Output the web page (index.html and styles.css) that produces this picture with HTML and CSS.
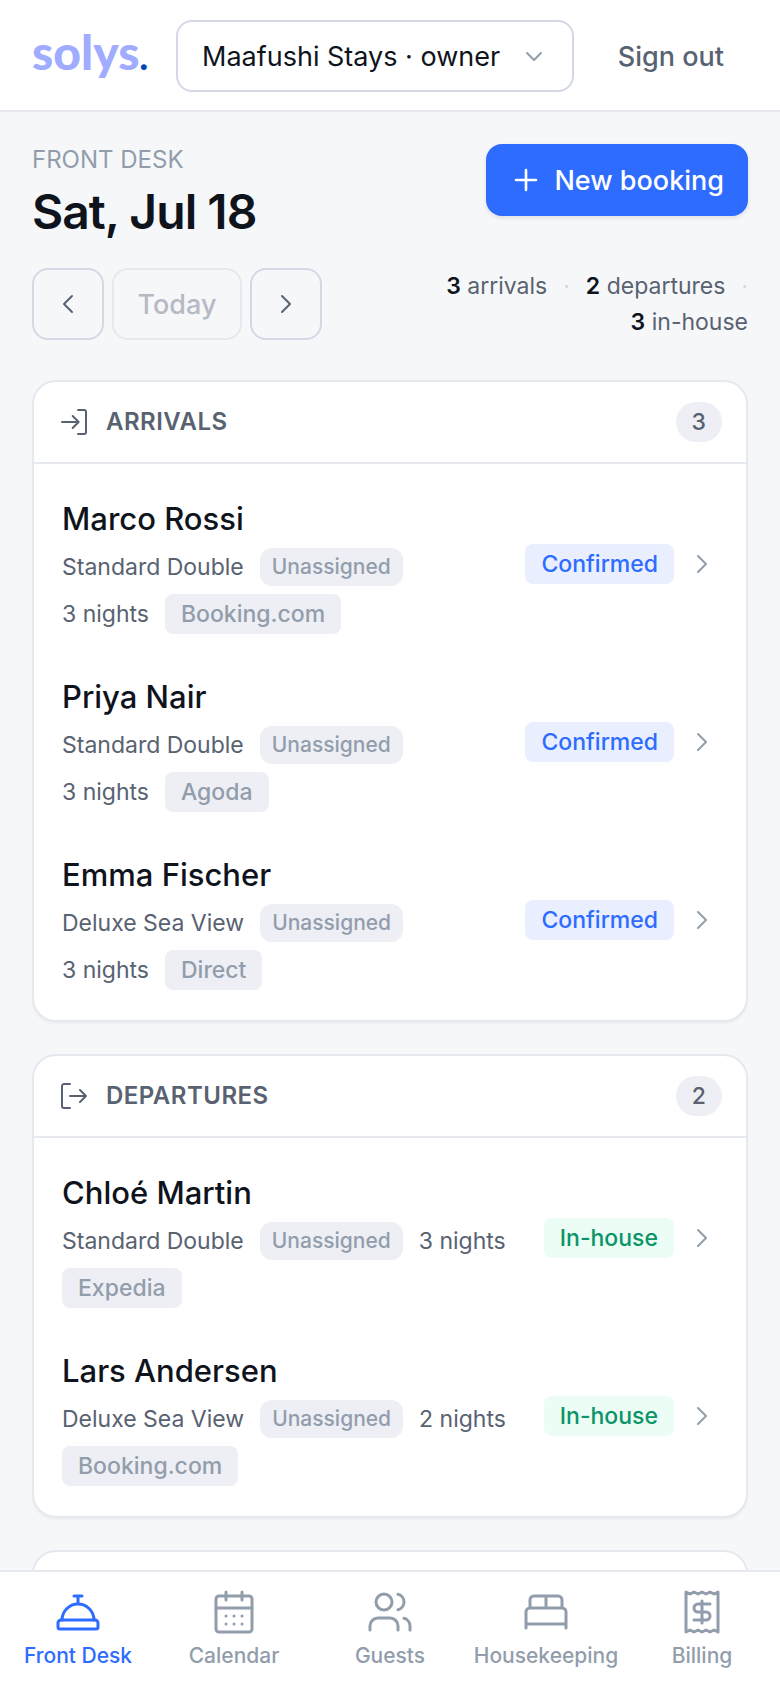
FILE: index.html
```html
<!DOCTYPE html>
<html lang="en">
<head>
  <meta charset="UTF-8">
  <meta name="viewport" content="width=device-width, initial-scale=1.0">
  <title>Front Desk - solys.</title>
  <link rel="stylesheet" href="styles.css">
</head>
<body>
  <!-- Shared icons -->
  <svg class="sprite" aria-hidden="true">
    <symbol id="chevron-right" viewBox="0 0 24 24"><path d="M9 18l6-6-6-6"/></symbol>
    <symbol id="chevron-left" viewBox="0 0 24 24"><path d="M15 18l-6-6 6-6"/></symbol>
  </svg>

  <header class="topbar">
    <a href="#" class="logo">solys<span class="logo-dot">.</span></a>
    <div class="property">
      <select aria-label="Property">
        <option>Maafushi Stays · owner</option>
      </select>
      <svg class="property-arrow" viewBox="0 0 24 24"><path d="M5 9l7 7 7-7"/></svg>
    </div>
    <button type="button" class="sign-out">Sign out</button>
  </header>

  <main>
    <div class="page-head">
      <div>
        <p class="eyebrow">FRONT DESK</p>
        <h1>Sat, Jul 18</h1>
      </div>
      <button type="button" class="btn-primary">
        <svg class="icon" viewBox="0 0 24 24"><path d="M12 4.500v15M4.500 12h15"/></svg>
        New booking
      </button>
    </div>

    <div class="toolbar">
      <div class="day-nav">
        <button type="button" aria-label="Previous day"><svg class="icon"><use href="#chevron-left"/></svg></button>
        <button type="button" class="today" disabled>Today</button>
        <button type="button" aria-label="Next day"><svg class="icon"><use href="#chevron-right"/></svg></button>
      </div>
      <div class="stats">
        <span><strong>3</strong> arrivals</span>
        <span class="sep">·</span>
        <span><strong>2</strong> departures</span>
        <span class="sep">·</span>
        <span><strong>3</strong> in-house</span>
      </div>
    </div>

    <section class="card">
      <div class="card-head">
        <svg class="icon" viewBox="0 0 24 24"><path d="M15 3h4.500a1.500 1.500 0 0 1 1.500 1.500v15a1.500 1.500 0 0 1-1.500 1.500H15"/><path d="M3 12h12.500M11 7.500l4.500 4.500-4.500 4.500"/></svg>
        <h2>ARRIVALS</h2>
        <span class="count">3</span>
      </div>
      <div class="list">
        <a href="#" class="booking">
          <div class="info">
            <h3>Marco Rossi</h3>
            <div class="meta">
              <span>Standard Double</span>
              <span class="room">Unassigned</span>
              <span>3 nights</span>
              <span class="tag">Booking.com</span>
            </div>
          </div>
          <span class="tag confirmed">Confirmed</span>
          <svg class="icon"><use href="#chevron-right"/></svg>
        </a>
        <a href="#" class="booking">
          <div class="info">
            <h3>Priya Nair</h3>
            <div class="meta">
              <span>Standard Double</span>
              <span class="room">Unassigned</span>
              <span>3 nights</span>
              <span class="tag">Agoda</span>
            </div>
          </div>
          <span class="tag confirmed">Confirmed</span>
          <svg class="icon"><use href="#chevron-right"/></svg>
        </a>
        <a href="#" class="booking">
          <div class="info">
            <h3>Emma Fischer</h3>
            <div class="meta">
              <span>Deluxe Sea View</span>
              <span class="room">Unassigned</span>
              <span>3 nights</span>
              <span class="tag">Direct</span>
            </div>
          </div>
          <span class="tag confirmed">Confirmed</span>
          <svg class="icon"><use href="#chevron-right"/></svg>
        </a>
      </div>
    </section>

    <section class="card">
      <div class="card-head">
        <svg class="icon" viewBox="0 0 24 24"><path d="M9 3H4.500A1.500 1.500 0 0 0 3 4.500v15A1.500 1.500 0 0 0 4.500 21H9"/><path d="M9 12h12M16.500 7.500L21 12l-4.500 4.500"/></svg>
        <h2>DEPARTURES</h2>
        <span class="count">2</span>
      </div>
      <div class="list">
        <a href="#" class="booking">
          <div class="info">
            <h3>Chloé Martin</h3>
            <div class="meta">
              <span>Standard Double</span>
              <span class="room">Unassigned</span>
              <span>3 nights</span>
              <span class="tag">Expedia</span>
            </div>
          </div>
          <span class="tag in-house">In-house</span>
          <svg class="icon"><use href="#chevron-right"/></svg>
        </a>
        <a href="#" class="booking">
          <div class="info">
            <h3>Lars Andersen</h3>
            <div class="meta">
              <span>Deluxe Sea View</span>
              <span class="room">Unassigned</span>
              <span>2 nights</span>
              <span class="tag">Booking.com</span>
            </div>
          </div>
          <span class="tag in-house">In-house</span>
          <svg class="icon"><use href="#chevron-right"/></svg>
        </a>
      </div>
    </section>

    <section class="card">
      <div class="card-head"></div>
    </section>
  </main>

  <nav class="tabs">
    <a href="#" class="active">
      <svg viewBox="0 0 24 24"><path d="M4 16a8 8 0 0 1 16 0M12 8V4M10 4h4"/><path d="M3.500 16h17a1.500 1.500 0 0 1 1.500 1.500v2a1 1 0 0 1-1 1H3a1 1 0 0 1-1-1v-2A1.500 1.500 0 0 1 3.500 16z"/></svg>
      Front Desk
    </a>
    <a href="#">
      <svg viewBox="0 0 24 24"><rect x="3" y="4" width="18" height="18" rx="1.500"/><path d="M3 10h18M8 2v4M16 2v4M8 14h.01M12 14h.01M16 14h.01M8 18h.01M12 18h.01M16 18h.01"/></svg>
      Calendar
    </a>
    <a href="#">
      <svg viewBox="0 0 24 24"><circle cx="9" cy="7" r="4"/><path d="M2 21v-2a4 4 0 0 1 4-4h6a4 4 0 0 1 4 4v2M16 3.130a4 4 0 0 1 0 7.750M22 21v-2a4 4 0 0 0-3-3.870"/></svg>
      Guests
    </a>
    <a href="#">
      <svg viewBox="0 0 24 24"><path d="M2 20v-8a2 2 0 0 1 2-2h16a2 2 0 0 1 2 2v8M2 18h20M4 10V6a2 2 0 0 1 2-2h12a2 2 0 0 1 2 2v4M12 4v6"/></svg>
      Housekeeping
    </a>
    <a href="#">
      <svg viewBox="0 0 24 24"><path d="M4 2v20l2-1 2 1 2-1 2 1 2-1 2 1 2-1 2 1V2l-2 1-2-1-2 1-2-1-2 1-2-1-2 1z"/><path d="M16 8h-6a2 2 0 1 0 0 4h4a2 2 0 1 1 0 4H8M12 17.500v-11"/></svg>
      Billing
    </a>
  </nav>
</body>
</html>
```

FILE: styles.css
```css
* {
  box-sizing: border-box;
}
body {
  display: flex;
  flex-direction: column;
  height: 100vh;
  margin: 0;
  font-family: Inter, "Liberation Sans", sans-serif;
  font-size: 23px;
  line-height: 36px;
  color: #0f141c;
  background-color: #f6f7f9;
}
h1, h2, h3, p {
  margin: 0;
}
a {
  color: inherit;
  text-decoration: none;
}
button, select {
  font-family: inherit;
  font-size: 27px;
  font-weight: 500;
  height: 72px;
  border-radius: 16px;
  cursor: pointer;
}
svg {
  fill: none;
  stroke: currentColor;
  stroke-width: 1.5;
  stroke-linecap: round;
  stroke-linejoin: round;
}
.sprite {
  display: none;
}
.icon {
  width: 32px;
  height: 32px;
  flex-shrink: 0;
}

/* Top bar */
.topbar {
  display: flex;
  align-items: center;
  flex-shrink: 0;
  padding: 20px 32px 18px;
  background-color: white;
  border-bottom: 2px solid #e6e9ef;
}
.logo {
  min-width: 116px;
  padding-bottom: 4px;
  font-family: Lato, sans-serif;
  font-size: 48px;
  line-height: 56px;
  font-weight: 900;
  color: #a0acff;
}
.logo-dot {
  font-size: 36px;
  color: #0047b3;
}
.property {
  position: relative;
  flex: 1;
  margin-left: 28px;
}
.property select {
  display: block;
  width: 100%;
  padding: 0 48px 0 24px;
  font-weight: 400;
  color: #0f141c;
  background-color: white;
  border: 2px solid #d2d9e4;
  appearance: none;
}
.property-arrow {
  position: absolute;
  top: 24px;
  right: 28px;
  width: 24px;
  height: 24px;
  color: #929dac;
  stroke-width: 2;
  pointer-events: none;
}
.sign-out {
  margin-left: 20px;
  padding: 0 24px;
  color: #586271;
  background: none;
  border: none;
}

/* Page */
main {
  flex: 1;
  min-height: 0;
  padding: 32px;
  overflow-y: auto;
  scrollbar-width: none;
}
.page-head {
  display: flex;
  justify-content: space-between;
  align-items: flex-start;
}
.eyebrow {
  font-size: 24px;
  line-height: 32px;
  color: #929dac;
}
h1 {
  margin-top: 4px;
  font-size: 48px;
  line-height: 64px;
  font-weight: 600;
  letter-spacing: -0.02em;
}
.btn-primary {
  display: flex;
  align-items: center;
  gap: 12px;
  padding: 0 24px;
  color: white;
  background-color: #2e6bff;
  border: none;
  box-shadow: 0 2px 4px rgba(15, 20, 28, 0.1);
}
.btn-primary .icon {
  stroke-width: 2;
}
.toolbar {
  display: flex;
  justify-content: space-between;
  gap: 24px;
  margin: 24px 0 40px;
}
.day-nav {
  display: flex;
  gap: 8px;
}
.day-nav button {
  display: flex;
  align-items: center;
  justify-content: center;
  width: 72px;
  padding: 0;
  color: #586271;
  background: none;
  border: 2px solid #d2d9e4;
}
.day-nav .today {
  width: 130px;
  color: #b5bac3;
  border-color: #e6e8ef;
}
.stats {
  display: flex;
  flex: 1;
  flex-wrap: wrap;
  justify-content: flex-end;
  column-gap: 16px;
  color: #586271;
}
.stats strong {
  font-weight: 600;
  color: #0f141c;
}
.stats .sep {
  color: #d2d9e4;
}

/* Booking cards */
.card {
  margin-bottom: 32px;
  background-color: white;
  border: 2px solid #e6e8ef;
  border-radius: 24px;
  box-shadow: 0 2px 2px rgba(15, 20, 28, 0.04);
}
.card-head {
  display: flex;
  align-items: center;
  gap: 16px;
  height: 82px;
  padding: 0 24px;
  color: #586271;
  border-bottom: 2px solid #e6e9ef;
}
.card-head h2 {
  flex: 1;
  font-size: 24px;
  font-weight: 600;
  letter-spacing: 0.02em;
}
.count {
  padding: 0 16px;
  line-height: 40px;
  font-weight: 500;
  background-color: #eeeff4;
  border-radius: 20px;
}
.list {
  display: flex;
  flex-direction: column;
  gap: 2px;
  padding: 12px;
}
.booking {
  display: flex;
  align-items: center;
  gap: 12px;
  padding: 18px 16px;
  color: #929dac;
}
.info {
  flex: 1;
  margin-right: 16px;
}
.info h3 {
  margin-bottom: 4px;
  font-size: 31px;
  line-height: 50px;
  font-weight: 500;
  color: #0f141c;
}
.meta {
  display: flex;
  flex-wrap: wrap;
  align-items: center;
  gap: 8px 16px;
  color: #586271;
}
.room {
  padding: 0 12px;
  font-size: 21px;
  line-height: 38px;
  font-weight: 500;
  color: #929dac;
  background-color: #eeeff4;
  border-radius: 12px;
}
.tag {
  padding: 0 16px;
  line-height: 40px;
  font-weight: 500;
  color: #929dac;
  background-color: #eeeff4;
  border-radius: 8px;
}
.confirmed {
  color: #2e6bff;
  background-color: #e9efff;
}
.in-house {
  color: #0a9467;
  background-color: #ebfdf5;
}

/* Bottom tabs */
.tabs {
  display: grid;
  grid-template-columns: repeat(5, 1fr);
  flex-shrink: 0;
  padding: 16px 0;
  background-color: white;
  border-top: 2px solid #e6e9ef;
}
.tabs a {
  display: flex;
  flex-direction: column;
  align-items: center;
  gap: 4px;
  font-size: 21px;
  line-height: 32px;
  font-weight: 500;
  color: #929dac;
}
.tabs a.active {
  color: #2e6bff;
}
.tabs svg {
  width: 48px;
  height: 48px;
}
```
